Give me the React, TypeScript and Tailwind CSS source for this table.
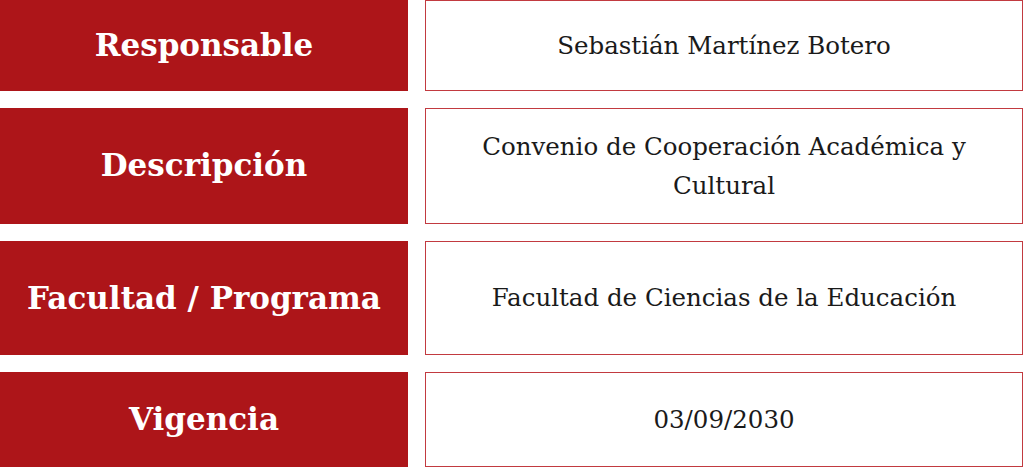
import React from "react"

const rows = [
  { label: "Responsable", value: "Sebastián Martínez Botero", h: "h-[92px]" },
  { label: "Descripción", value: "Convenio de Cooperación Académica y Cultural", h: "h-[117px]" },
  { label: "Facultad / Programa", value: "Facultad de Ciencias de la Educación", h: "h-[116px]" },
  { label: "Vigencia", value: "03/09/2030", h: "h-[96px]" },
]

export default function App() {
  return (
    <main className="w-[1024px] h-[467px] overflow-hidden bg-white flex flex-col gap-[17px]">
      {rows.map((row) => (
        <div key={row.label} className={`flex gap-[17px] pr-[1px] ${row.h}`}>
          {/* label */}
          <div className="w-[408px] shrink-0 bg-[#ad1519] flex items-center justify-center">
            <span className="text-white font-bold text-[31px] font-['DejaVu_Serif',serif]">
              {row.label}
            </span>
          </div>
          {/* value */}
          <div className="flex-1 border border-[#c23a40] flex items-center justify-center px-12">
            <p className="text-center text-[#1a1a1a] text-[24.5px] leading-[39px] font-['DejaVu_Serif',serif]">
              {row.value}
            </p>
          </div>
        </div>
      ))}
    </main>
  )
}
